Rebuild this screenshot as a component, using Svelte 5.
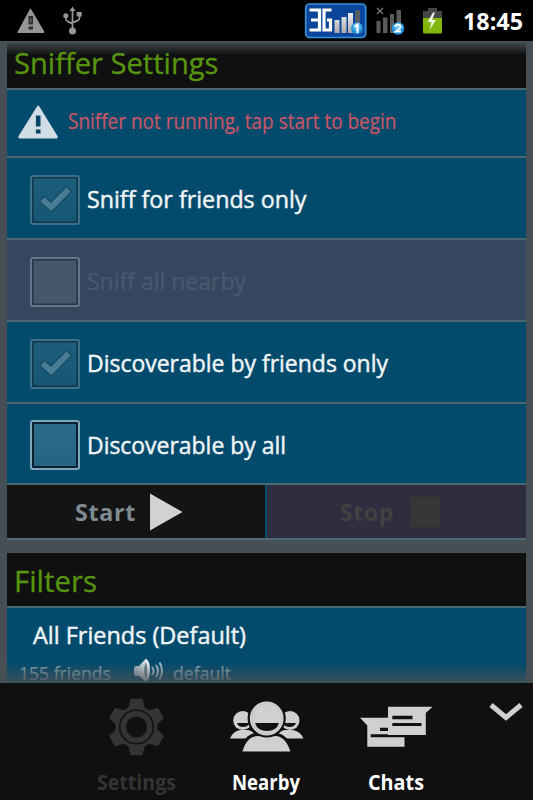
<script>
  // Condenses a label horizontally so that it fills the given width.
  function fit(node, width) {
    const natural = node.getBoundingClientRect().width;
    node.style.transform = `scaleX(${width / natural})`;
    node.style.marginRight = `${width - natural}px`;
  }

  const options = [
    { label: 'Sniff for friends only', width: 219.5, checked: true, state: 'locked' },
    { label: 'Sniff all nearby', width: 159, checked: false, state: 'disabled' },
    { label: 'Discoverable by friends only', width: 301, checked: true, state: 'locked' },
    { label: 'Discoverable by all', width: 199, checked: false, state: 'open' }
  ];
</script>

<div class="screen">
  <header class="status">
    <svg class="left" width="90" height="41" viewBox="0 0 90 41">
      <path d="M31 9 L44 31 Q45 33 43 33 H19 Q16 33 18 31 L30 9 Q30.500 8 31 9Z" fill="#969696" />
      <path d="M28.500 16h4.500v8.500h-4.500zM28.500 26.500h4.500v3h-4.500z" fill="#2c2c2c" />
      <path d="M30.300 18h1v5h-1z" fill="#777" />
      <g fill="none" stroke="#969696" stroke-width="1.700">
        <path d="M72.500 9V31M66 16v3q0 2 2 2.600l4.500 2M79.500 15v3q0 2-2 2.600l-5 2" />
      </g>
      <path d="M72.500 6.500l3 4.500h-6zM76.700 12h5v4.500h-5z" fill="#969696" />
      <circle cx="65.800" cy="15.800" r="2.500" fill="#969696" />
      <circle cx="72.500" cy="31" r="3.500" fill="#969696" />
    </svg>
    <div class="right">
      <svg width="150" height="41" viewBox="303 0 150 41">
        <defs>
          <linearGradient id="bar" x2="0" y2="1"><stop stop-color="#eee" /><stop offset="1" stop-color="#aaa" /></linearGradient>
          <radialGradient id="ball" cy=".35"><stop stop-color="#8ddcff" /><stop offset="1" stop-color="#1689d5" /></radialGradient>
        </defs>
        <rect x="305.700" y="4" width="60" height="33.500" rx="4" fill="#0b459b" stroke="#3892d9" stroke-width="1.700" />
        <path d="M309.500 10H319.500V30H309.500M311 20H319M331.500 10H324V30H330.500V20H327" fill="none" stroke="#fff" stroke-width="3.200" />
        <path d="M334.500 20h5v13h-5zM341.500 17h5v16h-5zM348 13h5v20h-5z" fill="url(#bar)" />
        <path d="M355 10h5v23h-5z" fill="#555d66" />
        <circle cx="357" cy="28.500" r="6" fill="url(#ball)" />
        <path d="M354.500 26.500l3-2v8.500" fill="none" stroke="#fff" stroke-width="2" />
        <path d="M377 8l6 6M383 8l-6 6" stroke="#777" stroke-width="1.300" />
        <path d="M376.500 21h4v12h-4zM383 17.500h4.500V33H383zM390 14h4v19h-4zM396.500 10h4.500v23h-4.500z" fill="#5b5b5b" />
        <circle cx="398" cy="28.500" r="6.300" fill="url(#ball)" />
        <path d="M395.300 27q0-2.300 2.700-2.300t2.500 2.200q0 1.500-4.700 4.700h5.200" fill="none" stroke="#fff" stroke-width="1.800" />
        <path d="M428 8h9v3h5v7h-19v-7h5z" fill="#454545" />
        <path d="M423 18h19v14q0 1.500-1.500 1.500h-16q-1.500 0-1.500-1.500z" fill="#83b60b" />
        <path d="M433 12.500l-5.500 9.500h4l-2 8 6.500-10h-4l3-7.500z" fill="#eef5df" />
      </svg>
      <span class="clock" use:fit={60}>18:45</span>
    </div>
  </header>

  <main>
    <section class="card">
      <h2><span use:fit={204.5}>Sniffer Settings</span></h2>
      <div class="row notice">
        <svg width="42" height="36" viewBox="0 0 42 36">
          <path d="M20 2.500Q21 .5 22.300 2.500L40.500 32Q41.500 34.500 39 34.500H3Q.5 34.500 1.600 32Z" fill="#d1dde4" />
          <path d="M18.900 11.500h4.600v11h-4.600zM18.900 25.500h4.600v4h-4.600z" fill="#044465" />
        </svg>
        <span use:fit={328.5}>Sniffer not running, tap start to begin</span>
      </div>
      {#each options as o}
        <div class="row option {o.state}">
          <span class="box">
            {#if o.checked}
              <svg width="36" height="30" viewBox="0 0 36 30">
                <path d="M2.500 17.500L7.500 12.500L14 18L29.500 2.500L34.500 7.500L14.500 28Z" fill="#4a7e94" stroke="#154d66" stroke-width="1.300" />
              </svg>
            {/if}
          </span>
          <span class="label" use:fit={o.width}>{o.label}</span>
        </div>
      {/each}
      <div class="actions">
        <div class="start">
          <span use:fit={61}>Start</span>
          <svg width="34" height="40" viewBox="0 0 34 40"><path d="M1 1.500L33.500 20L1 38.500Z" fill="#d2d2d2" /></svg>
        </div>
        <div class="stop"><span use:fit={54}>Stop</span><i></i></div>
      </div>
    </section>

    <section class="card second">
      <h2><span use:fit={83}>Filters</span></h2>
      <div class="filter">
        <span class="name" use:fit={213}>All Friends (Default)</span>
        <div class="meta">
          <span use:fit={92}>155 friends</span>
          <svg width="31" height="28" viewBox="0 0 31 28">
            <defs><linearGradient id="spk"><stop stop-color="#9fb0ba" /><stop offset="1" stop-color="#eef4f7" /></linearGradient></defs>
            <path d="M1 11Q1 9 3 9H6L13 1.500Q17 4 17 13T13 25L6 19H3Q1 19 1 17Z" fill="url(#spk)" />
            <path d="M13 5Q9 13 13 22Q15.500 13 13 5Z" fill="#6d8796" />
            <path d="M19 10q3 4 0 8M23 8q4 6 0 12M26.500 5.500q5 8 0 17" fill="none" stroke="#aebfca" stroke-width="2" />
          </svg>
          <span use:fit={58}>default</span>
        </div>
      </div>
    </section>
  </main>

  <nav>
    <div class="tab dim">
      <svg width="56" height="58" viewBox="-28.500 -29 56 58">
        <g fill="#343434">
          {#each [0, 60, 120, 180, 240, 300] as angle}
            <path d="M-9 -16L-6 -28.300H6L9 -16Z" transform="rotate({angle})" />
          {/each}
          <circle r="21" />
        </g>
        <circle r="16.800" fill="none" stroke="#151515" stroke-width="1.800" />
        <circle r="10.500" fill="#111" />
      </svg>
      <span use:fit={79}>Settings</span>
    </div>
    <div class="tab">
      <svg width="76" height="58" viewBox="0 0 76 58">
        <g fill="#d0d0d0">
          <circle cx="14.700" cy="22.500" r="9.500" /><circle cx="62" cy="22.500" r="9.500" />
          <path d="M2 40.500Q5 33 12 32H20Q26 33 29 40.500ZM75.500 40.500Q72.500 33 64.500 32H56.500Q50 33 48 40.500Z" />
        </g>
        <path d="M9 25q1 4 6 4t6.500-4zM55.500 25q1 4 6 4t6.500-4z" fill="#111" />
        <path d="M12.500 55Q17 36.500 30 36.500H47Q59 36.500 64.500 55Z" fill="#d0d0d0" stroke="#111" stroke-width="3" />
        <circle cx="38.700" cy="20.500" r="18" fill="#d0d0d0" stroke="#111" stroke-width="2.200" />
        <circle cx="38.700" cy="20.500" r="15" fill="none" stroke="#bababa" stroke-width=".7" />
        <path d="M27 25H51Q48.500 33 39 33T27 25Z" fill="#111" />
      </svg>
      <span use:fit={68}>Nearby</span>
    </div>
    <div class="tab">
      <svg width="76" height="58" viewBox="0 0 76 58">
        <path d="M2 19.700H46.500V48.700H9.300V27.500Z" fill="#d0d0d0" />
        <path d="M22 29.700H32V33H22zM12.700 36.300H47.500V39.300H12.700z" fill="#111" />
        <path d="M30 8.700H74.500L67.800 15V37H30Z" fill="#d0d0d0" />
        <path d="M34.300 17.700H54.500V21.300H34.300zM34.300 25H63.500V28H34.300z" fill="#111" />
      </svg>
      <span use:fit={56}>Chats</span>
    </div>
    <svg class="chevron" width="36" height="20" viewBox="0 0 36 20">
      <path d="M3 2L18 14.500L33 2" fill="none" stroke="#d0d0d0" stroke-width="5" />
    </svg>
  </nav>
</div>

<style>
  :global(body) { margin: 0; background: #000; }
  .screen {
    width: 533px; height: 800px; overflow: hidden; display: flex; flex-direction: column;
    font-family: "Open Sans", "Noto Sans", sans-serif; background: #464f54;
    font-variant-ligatures: none;
  }
  span { white-space: nowrap; }
  h2 span, .notice span, .label, .actions span, .name, .meta span, .tab span, .clock {
    display: inline-block; flex: none; transform-origin: 0 50%;
  }
  .status { height: 41px; flex: none; display: flex; justify-content: space-between; background: #000; }
  .right { display: flex; align-items: center; width: 230px; }
  .right svg { flex: none; margin-right: 10px; }
  .clock { color: #fff; font: 700 23px/40px "Open Sans", sans-serif; }
  main {
    height: 642px; flex: none; box-sizing: border-box; padding: 2px 7px 0; position: relative;
    overflow: hidden; background: #464f54;
  }
  main::before, main::after { content: ""; position: absolute; left: 0; right: 0; }
  main::before { top: 0; height: 14px; background: linear-gradient(#454f54, #454f5400); }
  main::after { bottom: 0; height: 20px; background: linear-gradient(#464f5400, #464f54e0); }
  .card { background: #034b6d; width: 519px; }
  h2 {
    margin: 0; height: 45px; background: #101010; color: #58950f; padding-left: 7px;
    font-size: 30px; font-weight: 400; line-height: 39px; border-bottom: 2px solid #4b6975;
    -webkit-text-stroke: .3px;
  }
  .row { display: flex; align-items: center; box-sizing: border-box; border-bottom: 2px solid #4b6975; }
  .notice { height: 68px; padding-left: 10px; color: #c95566; font-size: 21px; -webkit-text-stroke: .2px; }
  .notice svg { margin-right: 9px; margin-top: -3px; }
  .notice span { margin-top: -4px; }
  .option { height: 82px; padding: 3px 0 0 23px; font-size: 23.500px; color: #f0f5f7; -webkit-text-stroke: .45px; }
  .option:nth-of-type(5) { height: 81px; }
  .label { margin-top: -1px; }
  .box {
    width: 50px; height: 50px; box-sizing: border-box; margin-right: 7px; flex: none; border-radius: 3px;
    border: 2px solid #3d7189; background: linear-gradient(#1d5e7c, #165776);
    box-shadow: inset 0 0 0 1.500px #10364b; display: flex; align-items: center; justify-content: center;
  }
  .box svg { flex: none; margin-top: -2px; }
  .disabled { background: #34475f; color: #475970; }
  .disabled .box { border-color: #65758a; background: #45566d; box-shadow: inset 0 0 0 1.500px #24344b; }
  .open .box {
    border-color: #7da6b8; background: linear-gradient(#2d6b8a, #266482);
    box-shadow: inset 0 0 0 2px #0c2232;
  }
  .actions { display: flex; height: 53px; border-bottom: 2px solid #4d6877; }
  .actions > div { display: flex; align-items: center; box-sizing: border-box; }
  .actions span { font-size: 22.500px; font-weight: 700; letter-spacing: .7px; margin-top: 2px; }
  .start { width: 258px; background: #141414; padding-left: 68px; color: #7e8b92; }
  .start svg { margin-left: 13px; }
  .stop { width: 259px; margin-left: 2px; background: #2f2e40; color: #41423f; padding-left: 73px; }
  .stop i { width: 30px; height: 30px; margin-left: 16px; background: #373737; }
  .second { margin-top: 13px; }
  .second h2 { height: 53px; line-height: 55px; }
  .filter { height: 90px; }
  .name { margin: 9px 0 0 26px; font-size: 23px; line-height: 36px; color: #f0f5f7; -webkit-text-stroke: .45px; }
  .meta { display: flex; align-items: center; padding-left: 12px; height: 28px; margin-top: 4px; font-size: 17.500px; color: #84a3b2; -webkit-text-stroke: .2px; }
  .meta span { line-height: 16px; margin-top: 3px; }
  .meta svg { margin: 0 9px 0 22px; }
  nav { flex: 1; position: relative; display: flex; background: #101010; padding-left: 71px; }
  .tab { width: 130px; display: flex; flex-direction: column; align-items: center; color: #fff; }
  .tab svg { margin-top: 15px; height: 58px; flex: none; }
  .tab span { font-size: 21px; font-weight: 700; line-height: 28px; margin-top: 12px; }
  .dim { color: #343434; }
  .chevron { position: absolute; right: 9px; top: 20px; }
</style>
